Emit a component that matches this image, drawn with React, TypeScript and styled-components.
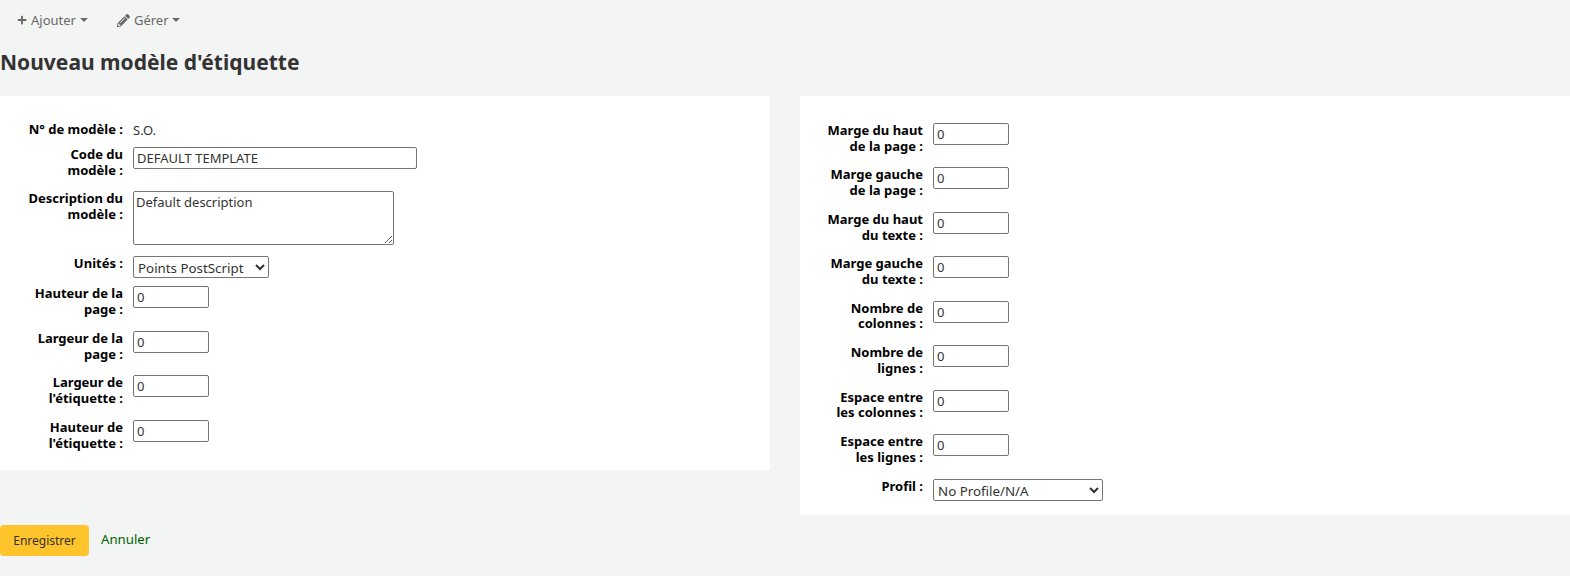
import React from "react";
import styled, { createGlobalStyle } from "styled-components";
import { FaPlus, FaPencilAlt } from "react-icons/fa";

const GlobalStyle = createGlobalStyle`
  html, body {
    margin: 0;
    padding: 0;
    background: #f3f4f4;
    color: #333;
    font-family: "Noto Sans", sans-serif;
    font-size: 13px;
  }
`;

const Toolbar = styled.div`
  display: flex;
  align-items: center;
  height: 40px;
  padding-left: 17px;
  gap: 29px;
`;

const ToolButton = styled.div`
  display: flex;
  align-items: center;
  gap: 4px;
  font-size: 13px;
  color: #696969;
`;

const Caret = styled.span<{ $shift?: number }>`
  width: 0;
  height: 0;
  border-top: 4px solid #696969;
  border-left: 4px solid transparent;
  border-right: 4px solid transparent;
  margin-left: ${(p) => p.$shift ?? 0}px;
`;

const Title = styled.h1`
  margin: 0;
  padding: 8px 0 20px;
  font-size: 21px;
  line-height: 28px;
  font-weight: 700;
  color: #333;
`;

const Columns = styled.div`
  display: grid;
  grid-template-columns: 770px 770px;
  gap: 30px;
  align-items: start;
`;

const Panel = styled.div<{ $top: number; $bottom: number }>`
  background: #fff;
  padding: ${(p) => p.$top}px 0 ${(p) => p.$bottom}px 27px;
`;

const Row = styled.div<{ $gap?: number }>`
  display: flex;
  align-items: flex-start;
  gap: 10px;
  margin-bottom: ${(p) => p.$gap ?? 12}px;
`;

const Label = styled.label`
  flex: none;
  width: 96px;
  text-align: right;
  font-weight: 700;
  color: #000;
  line-height: 15.6px;
  font-size: 13px;
`;

const Value = styled.span`
  line-height: 16px;
  font-size: 13px;
`;

const TextInput = styled.input<{ $width: number }>`
  box-sizing: border-box;
  width: ${(p) => p.$width}px;
  height: 22px;
  padding: 1px 3px;
  border: 1px solid #767676;
  border-radius: 2px;
  background: #fff;
  color: #333;
  font-family: inherit;
  font-size: 13px;
  margin: 0;
`;

const TextArea = styled.textarea`
  box-sizing: border-box;
  display: block;
  width: 261px;
  height: 54px;
  padding: 1px 2px;
  border: 1px solid #767676;
  border-radius: 2px;
  color: #333;
  font-family: inherit;
  font-size: 13px;
  margin: 0;
`;

const Select = styled.select<{ $width: number }>`
  box-sizing: border-box;
  width: ${(p) => p.$width}px;
  height: 22px;
  padding: 1px 0 0;
  border: 1px solid #767676;
  border-radius: 2px;
  background: #fff;
  color: #333;
  font-family: inherit;
  font-size: 13.33px;
  margin: 0;
`;

const Actions = styled.div`
  display: flex;
  align-items: center;
  gap: 12px;
  margin-top: 10px;
`;

const SaveButton = styled.button`
  width: 89px;
  height: 31px;
  border: none;
  border-radius: 4px;
  background: #ffc32b;
  color: #333;
  font-family: inherit;
  font-size: 12px;
  padding: 0;
`;

const CancelLink = styled.a`
  color: #006100;
  font-size: 13.2px;
  text-decoration: none;
  margin-top: -4px;
`;

const leftFields = [
  ["Hauteur de la page :", 13.8],
  ["Largeur de la page :", 12.8],
  ["Largeur de l'étiquette :", 13.8],
  ["Hauteur de l'étiquette :", 0],
] as const;

const rightFields = [
  "Marge du haut de la page :",
  "Marge gauche de la page :",
  "Marge du haut du texte :",
  "Marge gauche du texte :",
  "Nombre de colonnes :",
  "Nombre de lignes :",
  "Espace entre les colonnes :",
  "Espace entre les lignes :",
];

export default function App() {
  return (
    <>
      <GlobalStyle />
      <Toolbar>
        <ToolButton>
          <FaPlus size={10} />
          Ajouter
          <Caret />
        </ToolButton>
        <ToolButton>
          <FaPencilAlt size={13} />
          Gérer
          <Caret $shift={-1} />
        </ToolButton>
      </Toolbar>
      <Title>Nouveau modèle d'étiquette</Title>
      <Columns>
        <Panel $top={26} $bottom={18.8}>
          <Row $gap={9}>
            <Label>N° de modèle :</Label>
            <Value>S.O.</Value>
          </Row>
          <Row $gap={12.8}>
            <Label>Code du modèle :</Label>
            <TextInput $width={284} defaultValue="DEFAULT TEMPLATE" />
          </Row>
          <Row $gap={11}>
            <Label>Description du modèle :</Label>
            <TextArea defaultValue="Default description" />
          </Row>
          <Row $gap={8}>
            <Label>Unités :</Label>
            <Select $width={136}>
              <option>Points PostScript</option>
            </Select>
          </Row>
          {leftFields.map(([label, gap]) => (
            <Row key={label} $gap={gap}>
              <Label>{label}</Label>
              <TextInput $width={76} defaultValue="0" />
            </Row>
          ))}
        </Panel>
        <Panel $top={26.95} $bottom={14.2}>
          {rightFields.map((label) => (
            <Row key={label} $gap={13.3}>
              <Label>{label}</Label>
              <TextInput $width={76} defaultValue="0" />
            </Row>
          ))}
          <Row $gap={0}>
            <Label>Profil :</Label>
            <Select $width={170}>
              <option>No Profile/N/A</option>
            </Select>
          </Row>
        </Panel>
      </Columns>
      <Actions>
        <SaveButton>Enregistrer</SaveButton>
        <CancelLink href="#">Annuler</CancelLink>
      </Actions>
    </>
  );
}
